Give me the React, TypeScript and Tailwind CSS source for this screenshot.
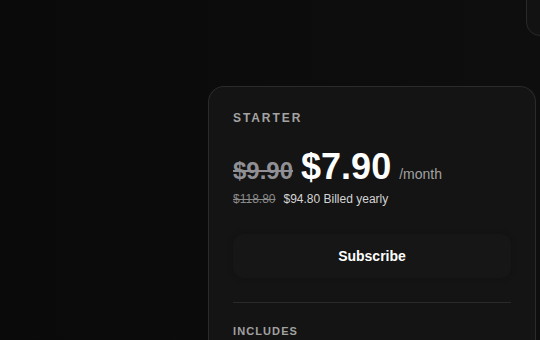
import React from "react";

export default function App() {
  return (
    <div
      className="w-[540px] h-[340px] overflow-hidden bg-gradient-to-r from-[#0a0a0a] to-[#0e0e0e] text-white"
      style={{ fontFamily: '"Liberation Sans", Arial, sans-serif' }}
    >
      <div className="flex h-[36px] justify-end">
        <div className="-mt-[20px] ml-auto h-[56px] w-[30px] shrink-0 -mr-[16px] rounded-[14px] border border-[#2a2a2a] bg-[#121212]" />
      </div>
      <div className="ml-[208px] mt-[50px] w-[328px] rounded-t-[16px] border border-b-0 border-[#2b2b2b] bg-[#141414] px-6 pt-[23px] pb-6">
        <div className="text-[12px] leading-4 font-bold tracking-[0.16em] text-[#a3a3a3]">STARTER</div>
        <div className="mt-[23px] flex items-baseline gap-2">
          <span className="text-[24px] leading-9 font-bold text-[#8f8f94] line-through decoration-[#8f8f94]">$9.90</span>
          <span className="text-[36px] leading-9 font-bold text-white">$7.90</span>
          <span className="text-[14px] leading-9 text-[#a1a1a1]">/month</span>
        </div>
        <div className="-mt-[1px] flex items-baseline gap-2 text-[12px] leading-4">
          <span className="text-[#8a8a8a] line-through">$118.80</span>
          <span className="text-[#d4d4d4]">$94.80 Billed yearly</span>
        </div>
        <button className="mt-[27px] flex h-[44px] w-full items-center justify-center rounded-[10px] bg-[#161616] text-[14px] font-bold text-white shadow-[0_0_6px_rgba(0,0,0,0.2)]">
          Subscribe
        </button>
        <div className="mt-[24px] h-px w-full bg-[#2a2a2a]" />
        <div className="mt-[20px] text-[11px] leading-4 font-bold tracking-[0.1em] text-[#a1a1a1]">INCLUDES</div>
      </div>
    </div>
  );
}
